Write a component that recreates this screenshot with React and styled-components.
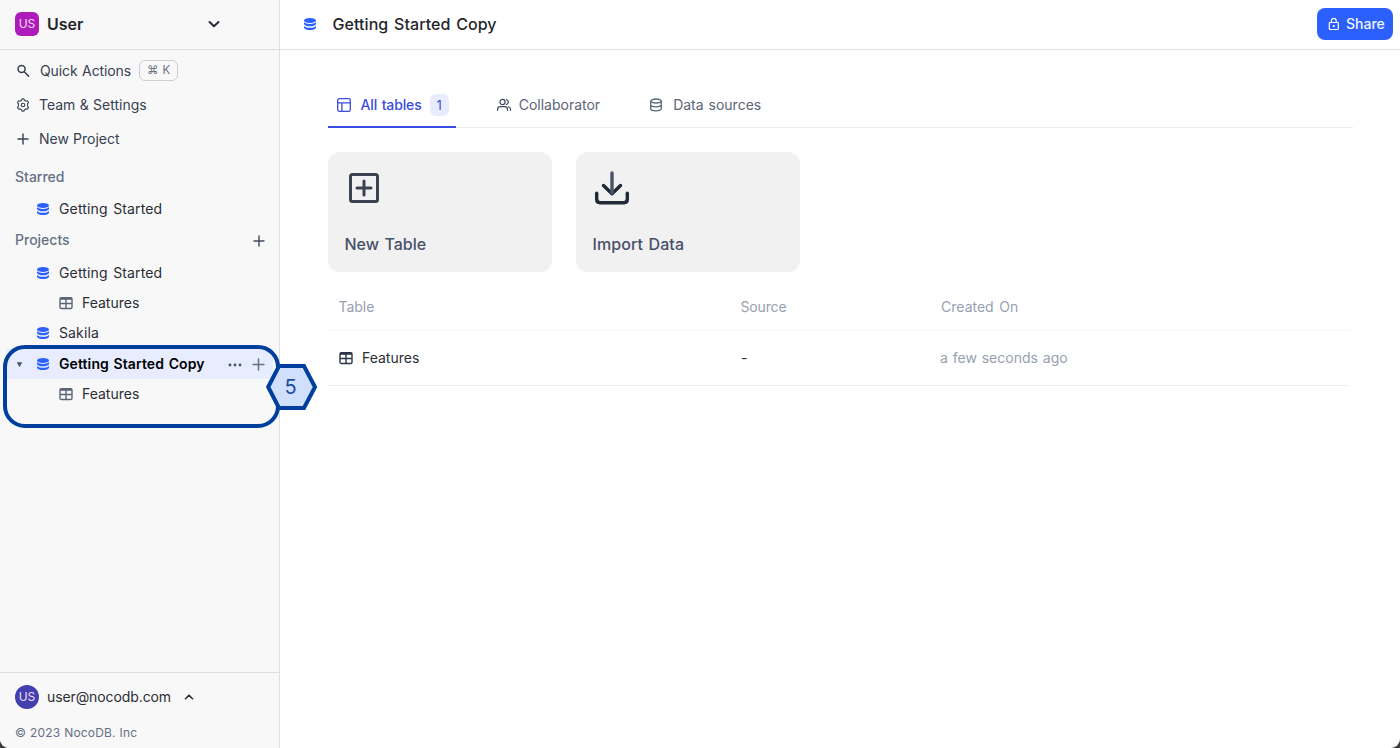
import React from "react";
import styled, { createGlobalStyle } from "styled-components";

const Global = createGlobalStyle`
  * { box-sizing: border-box; }
  body { margin: 0; background: #3c3c3e; font-family: Inter, "Liberation Sans", sans-serif; }
  svg { display: block; flex: none; }
`;

const Shell = styled.div`
  display: flex;
  width: 1400px;
  height: 748px;
  background: #fff;
  border-radius: 0 0 9px 9px;
  overflow: hidden;
  position: relative;
`;
const Text = styled.span`
  font-size: ${(p) => p.$size || 14}px;
  font-weight: ${(p) => p.$weight || 400};
  letter-spacing: ${(p) => p.$track || 0}px;
  word-spacing: ${(p) => p.$gap || 0}px;
  color: ${(p) => p.$color || "#2b2e35"};
  line-height: 20px;
  white-space: nowrap;
`;

const Sidebar = styled.aside`
  width: 280px;
  display: flex;
  flex-direction: column;
  background: #f8f8f8;
  border-right: 1px solid #dfdfe1;
`;
const Workspace = styled.div`
  height: 50px;
  display: flex;
  align-items: center;
  padding: 0 59px 2px 15px;
  border-bottom: 1px solid #dfdfe1;
`;
const Avatar = styled.div`
  width: 24px;
  height: 24px;
  border-radius: ${(p) => (p.$round ? "50%" : "6px")};
  background: ${(p) => (p.$round ? "#4240ae" : "#af1bb8")};
  color: #f3dff6;
  font-size: 12px;
  line-height: 24px;
  text-align: center;
  margin-right: 8px;
`;
const Push = styled.div`
  flex: 1;
`;
const Menu = styled.nav`
  display: flex;
  flex-direction: column;
  padding: 4px 0 5px;
`;
const MenuItem = styled.div`
  height: 34px;
  display: flex;
  align-items: center;
  padding-left: 16px;
`;
const IconSlot = styled.div`
  width: ${(p) => p.$w}px;
  padding-left: ${(p) => p.$inset || 0}px;
  display: flex;
  flex: none;
`;
const Kbd = styled.kbd`
  display: flex;
  align-items: center;
  justify-content: center;
  gap: 4px;
  width: 39px;
  height: 21px;
  margin: 0 0 1px 8px;
  padding-bottom: 2px;
  border: 1px solid #cdced6;
  border-radius: 6px;
  color: #6a7184;
  font: 11.5px Inter, sans-serif;
`;
const SectionTitle = styled.div`
  height: 31px;
  display: flex;
  align-items: center;
  padding: 0 14px 0 15px;
  > svg { margin-top: 2px; }
`;
const TreeRow = styled.div`
  height: 30px;
  display: flex;
  align-items: center;
  margin: ${(p) => p.$top || 0}px 6px 0;
  padding-left: ${(p) => (p.$nested ? 53 : p.$active ? 10 : 30)}px;
  padding-right: 8.5px;
  background: ${(p) => (p.$active ? "#e7ecff" : "transparent")};
`;
const Footer = styled.footer`
  height: 76px;
  border-top: 1px solid #dfdfe1;
  padding: 12px 15px 0;
  display: flex;
  flex-direction: column;
  gap: 14px;
`;
const Account = styled.div`
  display: flex;
  align-items: center;
  > svg { margin-left: 12px; }
`;

const Main = styled.main`
  flex: 1;
  display: flex;
  flex-direction: column;
`;
const TopBar = styled.header`
  height: 50px;
  display: flex;
  align-items: center;
  padding: 0 7px 1px 23px;
  border-bottom: 1px solid #dfdfe1;
`;
const ShareButton = styled.button`
  width: 76px;
  height: 32px;
  display: flex;
  align-items: center;
  gap: 6px;
  padding: 0 0 0 11px;
  border: 0;
  border-radius: 8px;
  background: #2b60fd;
  font-family: inherit;
`;
const Content = styled.section`
  padding: 33px 47px 0 48px;
`;
const Tabs = styled.div`
  display: flex;
  height: 45px;
  border-bottom: 1px solid #ebebed;
`;
const Tab = styled.div`
  height: 45px;
  display: flex;
  align-items: center;
  padding: 1px ${(p) => p.$right || 8}px 0 8px;
  margin-right: ${(p) => p.$after || 0}px;
  border-bottom: 2px solid ${(p) => (p.$active ? "#3a4cdf" : "transparent")};
`;
const Count = styled.span`
  width: 19px;
  height: 22px;
  margin-left: 8px;
  border-radius: 6px;
  background: #e7ecff;
  color: #3a4cdf;
  font-size: 13px;
  line-height: 22px;
  text-align: center;
`;
const Cards = styled.div`
  display: flex;
  gap: 24px;
  margin-top: 24px;
`;
const Card = styled.div`
  width: 224px;
  height: 120px;
  border-radius: 12px;
  background: #f1f1f1;
  padding: 16px 16px 18px;
  display: flex;
  flex-direction: column;
  justify-content: space-between;
  > span { padding-left: 0.5px; }
`;
const Table = styled.div`
  margin: 12px 3px 0 0;
`;
const Row = styled.div`
  display: grid;
  grid-template-columns: 402px 200px 1fr;
  align-items: center;
  height: ${(p) => (p.$head ? 47 : 55)}px;
  padding-left: ${(p) => (p.$head ? 10.5 : 10)}px;
  border-bottom: 1px solid ${(p) => (p.$head ? "#f6f6f7" : "#f0f0f1")};
`;
const Cell = styled.div`
  display: flex;
  align-items: center;
  padding-left: ${(p) => p.$indent || 0}px;
`;

const Callout = styled.div`
  position: absolute;
  left: 3px;
  top: 345px;
  width: 277px;
  height: 83px;
  border: 4px solid #003f9e;
  border-radius: 22px;
`;
const Step = styled.div`
  position: absolute;
  left: 265px;
  top: 363px;
  width: 53px;
  height: 48px;
  display: grid;
  place-items: center;
  > * { grid-area: 1 / 1; }
  > span { z-index: 1; margin-right: 2px; }
`;

const DbIcon = () => (
  <svg width="14" height="14" viewBox="0 0 14 14" fill="#2b60fd">
    <ellipse cx="7" cy="3.4" rx="6" ry="2.5" />
    <path d="M1 5.1C2.2 6.5 4.5 7 7 7s4.8-.5 6-1.9v1.8C12.5 8.5 10 9.3 7 9.3S1.5 8.5 1 6.9z" />
    <path d="M1 9C2.2 10.3 4.5 10.8 7 10.8s4.8-.5 6-1.8v1.7C12.5 12.3 10 13.1 7 13.1S1.5 12.3 1 10.7z" />
  </svg>
);
const TableIcon = ({ color = "#5c6478" }) => (
  <svg width="14" height="14" viewBox="0 0 14 14" fill="none" stroke={color} strokeWidth="1.4">
    <rect x="1" y="1.7" width="12" height="10.8" rx="1.3" />
    <path d="M1 2.7h12" strokeWidth="2.2" />
    <path d="M1 7.5h12M7 3v9" />
  </svg>
);
const Plus = ({ size = 12, color = "#414a5b", w = 1.4 }) => (
  <svg width={size} height={size} viewBox="0 0 12 12" stroke={color} strokeWidth={w} strokeLinecap="round">
    <path d="M6 1v10M1 6h10" />
  </svg>
);
const Chevron = ({ up, size = 12, w = 2 }) => (
  <svg width={size} height={size} viewBox="0 0 12 12" fill="none" stroke="#252c3a" strokeWidth={w} strokeLinecap="round" strokeLinejoin="round">
    <path d={up ? "M2.5 7.7L6 4.2l3.5 3.5" : "M1.5 4L6 8.2 10.5 4"} />
  </svg>
);
const SearchIcon = () => (
  <svg width="14" height="14" viewBox="0 0 14 14" fill="none" stroke="#374151" strokeWidth="1.5" strokeLinecap="round">
    <circle cx="5.6" cy="5.1" r="3.5" />
    <path d="M8.3 7.8l4.3 4.3" />
  </svg>
);
const GearIcon = () => (
  <svg width="14" height="14" viewBox="0 0 24 24" fill="none" stroke="#414a5b" strokeWidth="2" strokeLinecap="round" strokeLinejoin="round">
    <path d="M9.6 3.9L10.3 1.5h3.4l.7 2.4 2.5 1.4 2.5-.6 2.1 3.1-1.7 2v4.4l1.7 2-2.1 3.1-2.5-.6-2.5 1.4-.7 2.4h-3.4l-.7-2.4-2.5-1.4-2.5.6-2.1-3.1 1.7-2V9.8l-1.7-2 2.1-3.1 2.5.6z" />
    <circle cx="12" cy="12" r="3" />
  </svg>
);
const LayoutIcon = () => (
  <svg width="16" height="16" viewBox="0 0 16 16" fill="none" stroke="#3a4cdf" strokeWidth="1.3">
    <rect x="1.7" y="1.7" width="12.6" height="12.6" rx="1.6" />
    <path d="M1.7 5.9h12.6M5.9 5.9v8.4" />
  </svg>
);
const UsersIcon = () => (
  <svg width="16" height="16" viewBox="0 0 16 16" fill="none" stroke="#414a5b" strokeWidth="1.2" strokeLinecap="round">
    <circle cx="6.5" cy="5" r="2.6" />
    <path d="M1.6 13.3v-1c0-1.7 1.3-2.7 2.9-2.7h4.1c1.6 0 2.9 1 2.9 2.7v1M10.4 2.5a2.6 2.6 0 0 1 0 5M12.6 9.8c1.3.4 1.9 1.3 1.9 2.5v1" />
  </svg>
);
const SourceIcon = () => (
  <svg width="14" height="14" viewBox="0 0 14 14" fill="none" stroke="#5c6478" strokeWidth="1.3">
    <ellipse cx="7" cy="3" rx="5.3" ry="2" />
    <path d="M1.7 3v7.8c0 1.1 2.4 2 5.3 2s5.3-.9 5.3-2V3M1.7 6.8c0 1.1 2.4 2 5.3 2s5.3-.9 5.3-2" />
  </svg>
);
const LockIcon = () => (
  <svg width="12" height="14" viewBox="0 0 12 14" fill="none" stroke="#fff" strokeWidth="1.2">
    <rect x="1.3" y="5.5" width="9" height="7" rx=".8" />
    <path d="M3.4 5.5V3.7a2.4 2.4 0 0 1 4.8 0v1.8" />
    <circle cx="5.8" cy="9" r=".5" fill="#fff" />
  </svg>
);
const NewTableIcon = () => (
  <svg width="40" height="40" viewBox="0 0 40 40" fill="none" stroke="#3b4252" strokeWidth="3" strokeLinecap="round" strokeLinejoin="round">
    <rect x="6.5" y="6.5" width="27" height="27" rx="2" />
    <path d="M20 13v14M13 20h14" />
  </svg>
);
const ImportIcon = () => (
  <svg width="40" height="40" viewBox="0 0 40 40" fill="none" stroke="#1f2937" strokeWidth="3.4" strokeLinecap="round" strokeLinejoin="round">
    <path d="M4.7 25.2v6q0 3.5 3.5 3.5h23.6q3.5 0 3.5-3.5v-6M11.5 17.5l8.5 8.3 8.5-8.3" />
    <path d="M20 5v20" stroke="#4a5268" />
  </svg>
);

const Project = ({ name, top }) => (
  <TreeRow $top={top}>
    <IconSlot $w={23}><DbIcon /></IconSlot>
    <Text $track={0.14} $gap={1.4}>{name}</Text>
  </TreeRow>
);
const TreeTable = () => (
  <TreeRow $nested>
    <IconSlot $w={23}><TableIcon /></IconSlot>
    <Text>Features</Text>
  </TreeRow>
);

export default function App() {
  return (
    <>
      <Global />
      <Shell>
        <Sidebar>
          <Workspace>
            <Avatar>US</Avatar>
            <Text $size={16} $weight={600} $color="#24262b">User</Text>
            <Push />
            <Chevron />
          </Workspace>
          <Menu>
            <MenuItem>
              <IconSlot $w={24}><SearchIcon /></IconSlot>
              <Text $color="#374151" $track={-0.1} $gap={0.7}>Quick Actions</Text>
              <Kbd><span>⌘</span><span>K</span></Kbd>
            </MenuItem>
            <MenuItem>
              <IconSlot $w={23}><GearIcon /></IconSlot>
              <Text $color="#374151" $gap={0.4}>Team &amp; Settings</Text>
            </MenuItem>
            <MenuItem>
              <IconSlot $w={23} $inset={1}><Plus w={1.4} color="#374151" /></IconSlot>
              <Text $color="#374151" $gap={0.2}>New Project</Text>
            </MenuItem>
          </Menu>
          <SectionTitle><Text $weight={500} $color="#667085">Starred</Text></SectionTitle>
          <Project name="Getting Started" top={2} />
          <SectionTitle>
            <Text $weight={500} $color="#667085">Projects</Text>
            <Push />
            <Plus />
          </SectionTitle>
          <Project name="Getting Started" top={3} />
          <TreeTable />
          <Project name="Sakila" />
          <TreeRow $active $top={1}>
            <IconSlot $w={20}>
              <svg width="8" height="8" viewBox="0 0 8 8" fill="#4a5268"><path d="M.8 2.2h5.4L3.5 7.2z" /></svg>
            </IconSlot>
            <IconSlot $w={23}><DbIcon /></IconSlot>
            <Text $weight={600} $color="#000" $track={0.1} $gap={1}>Getting Started Copy</Text>
            <Push />
            <IconSlot $w={23.5}>
              <svg width="14" height="14" viewBox="0 0 14 14" fill="#4a5268">
                <circle cx="2" cy="8" r="1.4" /><circle cx="7" cy="8" r="1.4" /><circle cx="12" cy="8" r="1.4" />
              </svg>
            </IconSlot>
            <Plus size={13} color="#667085" />
          </TreeRow>
          <TreeTable />
          <Push />
          <Footer>
            <Account>
              <Avatar $round>US</Avatar>
              <Text $track={-0.1}>user@nocodb.com</Text>
              <Chevron up w={1.6} />
            </Account>
            <Text $size={12} $color="#667085" $track={0.18} $gap={0.3}>© 2023 NocoDB. Inc</Text>
          </Footer>
        </Sidebar>
        <Main>
          <TopBar>
            <IconSlot $w={29.5}><DbIcon /></IconSlot>
            <Text $size={16} $weight={500} $color="#24262b" $track={0.06} $gap={1.4}>Getting Started Copy</Text>
            <Push />
            <ShareButton>
              <LockIcon />
              <Text $weight={500} $color="#eef2ff">Share</Text>
            </ShareButton>
          </TopBar>
          <Content>
            <Tabs>
              <Tab $active $right={7} $after={32}>
                <IconSlot $w={24.5}><LayoutIcon /></IconSlot>
                <Text $weight={500} $color="#3a4cdf" $track={-0.12} $gap={0.9}>All tables</Text>
                <Count>1</Count>
              </Tab>
              <Tab $after={33}>
                <IconSlot $w={23}><UsersIcon /></IconSlot>
                <Text $color="#5c6478">Collaborator</Text>
              </Tab>
              <Tab>
                <IconSlot $w={24}><SourceIcon /></IconSlot>
                <Text $color="#5c6478" $gap={1}>Data sources</Text>
              </Tab>
            </Tabs>
            <Cards>
              <Card>
                <NewTableIcon />
                <Text $size={16} $weight={500} $color="#475069" $gap={1.2}>New Table</Text>
              </Card>
              <Card>
                <ImportIcon />
                <Text $size={16} $weight={500} $color="#475069" $track={0.1} $gap={1}>Import Data</Text>
              </Card>
            </Cards>
            <Table>
              <Row $head>
                <Text $color="#98a0b0" $track={-0.05}>Table</Text>
                <Text $color="#98a0b0" $track={-0.15}>Source</Text>
                <Cell $indent={0.6}>
                  <Text $color="#98a0b0" $gap={1.6}>Created On</Text>
                </Cell>
              </Row>
              <Row>
                <Cell>
                  <IconSlot $w={24} $inset={0.5}><TableIcon color="#2c3547" /></IconSlot>
                  <Text>Features</Text>
                </Cell>
                <Cell $indent={1}>
                  <Text>-</Text>
                </Cell>
                <Text $color="#98a0b0" $track={0.03} $gap={0.8}>a few seconds ago</Text>
              </Row>
            </Table>
          </Content>
        </Main>
        <Callout />
        <Step>
          <svg width="53" height="48" viewBox="0 0 53 48" fill="#cfdffc" stroke="#003f9e" strokeWidth="4">
            <path d="M3.2 24L14 3h25l11 21-11 21H14z" />
          </svg>
          <Text $size={20} $color="#1d4c9f">5</Text>
        </Step>
      </Shell>
    </>
  );
}
